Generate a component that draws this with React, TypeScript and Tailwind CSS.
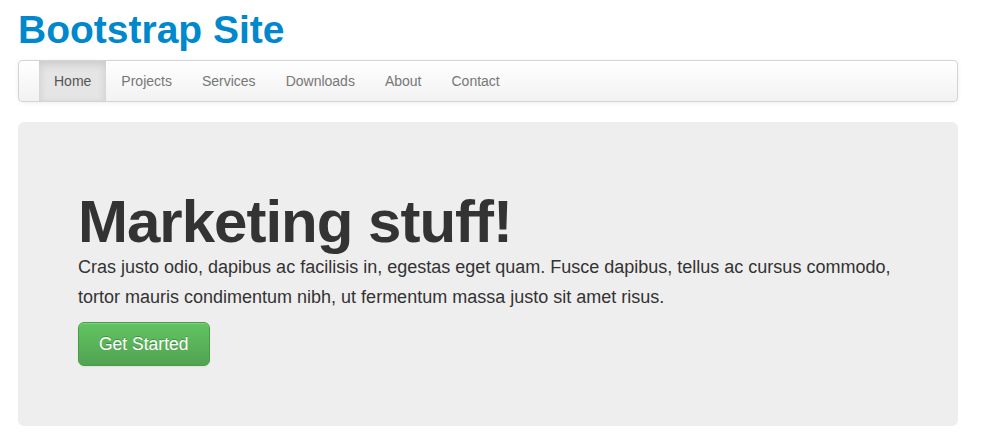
import React from "react";

const navItems = ["Home", "Projects", "Services", "Downloads", "About", "Contact"];

export default function App() {
  return (
    <div className="min-h-screen bg-white font-['Liberation_Sans',Arial,sans-serif] text-[14px] leading-[20px] text-[#333]">
      <div className="ml-[18px] w-[940px]">
        {/* Brand */}
        <h1 className="my-[10px] text-[39px] leading-[40px] font-bold text-[#0088cc]">
          Bootstrap Site
        </h1>

        {/* Navbar */}
        <div className="mb-[20px] rounded-[4px] border border-[#d4d4d4] bg-gradient-to-b from-white to-[#f2f2f2] px-[20px] shadow-[0_1px_4px_rgba(0,0,0,0.065)]">
          <ul className="flex min-h-[40px]">
            {navItems.map((item, i) => (
              <li key={item}>
                <a
                  className={
                    i === 0
                      ? "block bg-[#e5e5e5] px-[15px] py-[10px] text-[#555] shadow-[inset_0_3px_8px_rgba(0,0,0,0.125)]"
                      : "block px-[15px] py-[10px] text-[#777]"
                  }
                >
                  {item}
                </a>
              </li>
            ))}
          </ul>
        </div>

        {/* Hero */}
        <div className="rounded-[6px] bg-[#eeeeee] p-[60px]">
          <h1 className="mt-[10px] text-[60px] leading-[60px] font-bold tracking-[-1px] text-[#333]">
            Marketing stuff!
          </h1>
          <p className="mb-[10px] text-[18px] leading-[30px] text-[#333]">
            Cras justo odio, dapibus ac facilisis in, egestas eget quam. Fusce dapibus, tellus ac cursus commodo,
            tortor mauris condimentum nibh, ut fermentum massa justo sit amet risus.
          </p>
          <button className="rounded-[6px] border border-[#4a9a4a] bg-gradient-to-b from-[#62c462] to-[#51a351] px-[20px] py-[10px] text-[17.5px] leading-[22px] text-white [text-shadow:0_-1px_0_rgba(0,0,0,0.25)] shadow-[inset_0_1px_0_rgba(255,255,255,0.2),0_1px_2px_rgba(0,0,0,0.05)]">
            Get Started
          </button>
        </div>
      </div>
    </div>
  );
}
